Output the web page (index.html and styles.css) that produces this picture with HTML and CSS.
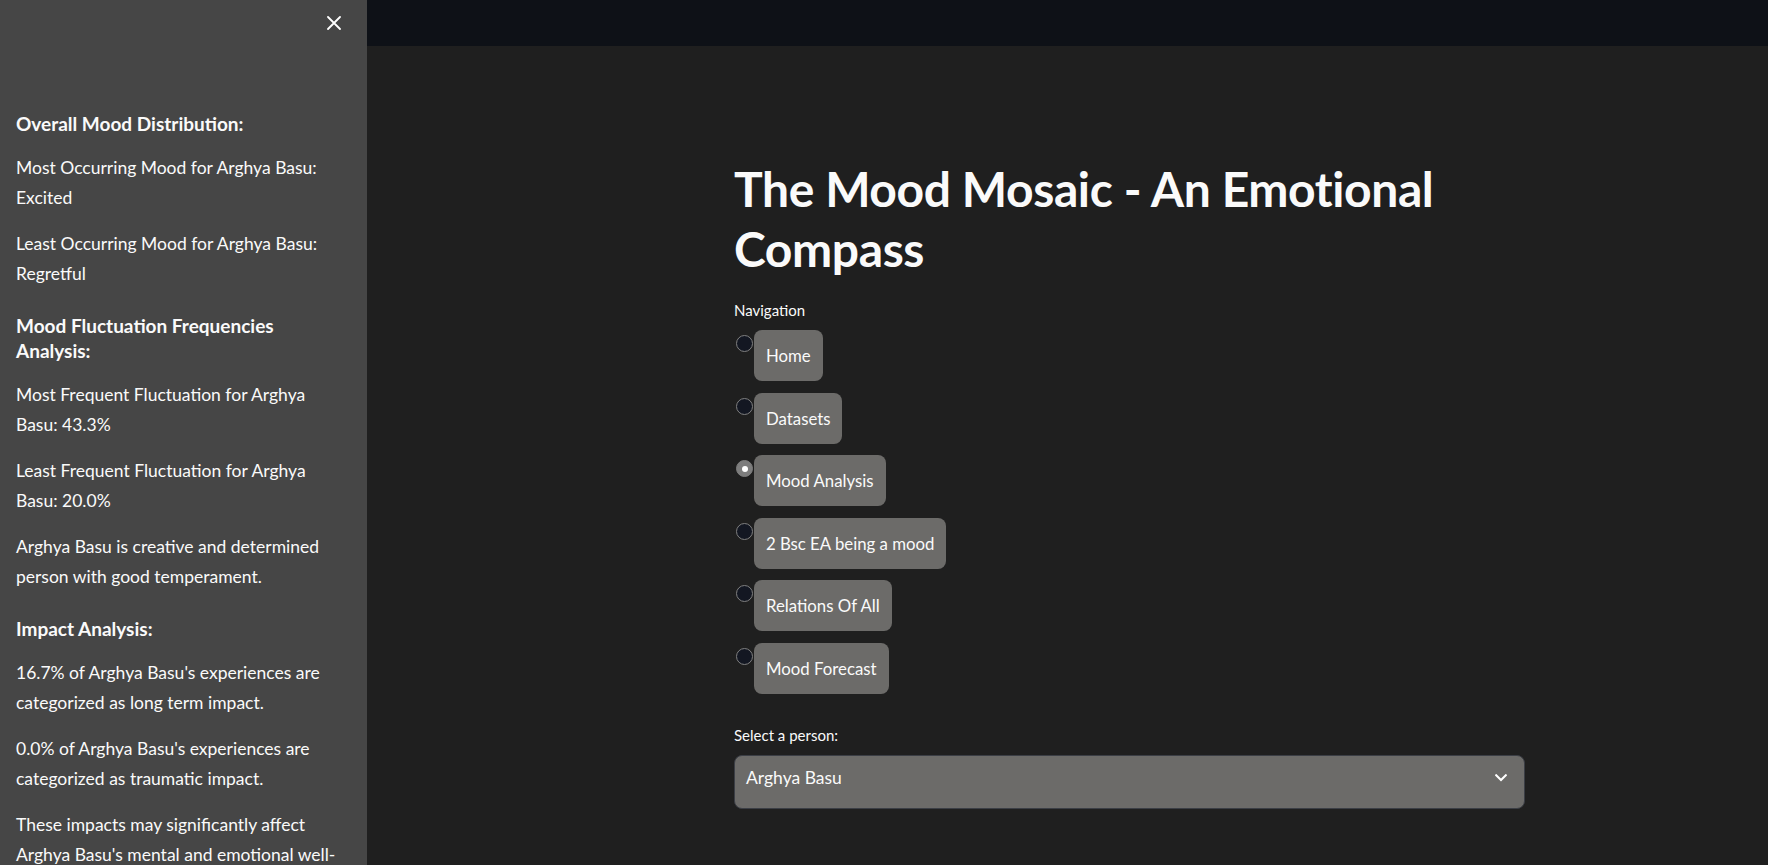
FILE: index.html
```html
<!DOCTYPE html>
<html lang="en">
<head>
<meta charset="utf-8">
<title>The Mood Mosaic - An Emotional Compass</title>
<link rel="stylesheet" href="styles.css">
</head>
<body>
<div class="app">
  <aside class="sidebar">
    <div class="sidebar-top">
      <button class="close-btn" aria-label="Close sidebar">
        <svg width="14" height="14" viewBox="0 0 14 14"><path d="M1 1 L13 13 M13 1 L1 13" stroke="#ffffff" stroke-width="1.8" stroke-linecap="round" fill="none"/></svg>
      </button>
    </div>
    <div class="sidebar-content">
      <h3 class="side-heading">Overall Mood Distribution:</h3>
      <p class="side-text">Most Occurring Mood for Arghya Basu:<br>Excited</p>
      <p class="side-text">Least Occurring Mood for Arghya Basu:<br>Regretful</p>
      <h3 class="side-heading">Mood Fluctuation Frequencies<br>Analysis:</h3>
      <p class="side-text">Most Frequent Fluctuation for Arghya<br>Basu: 43.3%</p>
      <p class="side-text">Least Frequent Fluctuation for Arghya<br>Basu: 20.0%</p>
      <p class="side-text">Arghya Basu is creative and determined<br>person with good temperament.</p>
      <h3 class="side-heading">Impact Analysis:</h3>
      <p class="side-text">16.7% of Arghya Basu's experiences are<br>categorized as long term impact.</p>
      <p class="side-text">0.0% of Arghya Basu's experiences are<br>categorized as traumatic impact.</p>
      <p class="side-text">These impacts may significantly affect<br>Arghya Basu's mental and emotional well-<br>being.</p>
    </div>
  </aside>
  <main class="main">
    <header class="topbar"></header>
    <section class="content">
      <div class="block">
        <h1 class="title">The Mood Mosaic - An Emotional Compass</h1>
        <div class="field-label nav-label">Navigation</div>
        <div class="radio-group">
          <label class="radio-item"><span class="radio-dot"></span><span class="radio-pill">Home</span></label>
          <label class="radio-item"><span class="radio-dot"></span><span class="radio-pill">Datasets</span></label>
          <label class="radio-item"><span class="radio-dot checked"></span><span class="radio-pill">Mood Analysis</span></label>
          <label class="radio-item"><span class="radio-dot"></span><span class="radio-pill">2 Bsc EA being a mood</span></label>
          <label class="radio-item"><span class="radio-dot"></span><span class="radio-pill">Relations Of All</span></label>
          <label class="radio-item"><span class="radio-dot"></span><span class="radio-pill">Mood Forecast</span></label>
        </div>
        <div class="field-label select-label">Select a person:</div>
        <div class="select-box">
          <span class="select-value">Arghya Basu</span>
          <svg class="chevron" width="12" height="8" viewBox="0 0 12 8"><path d="M1.2 1.2 L6 6 L10.8 1.2" stroke="#ffffff" stroke-width="2" fill="none" stroke-linecap="square"/></svg>
        </div>
      </div>
    </section>
  </main>
</div>
</body>
</html>
```
FILE: styles.css
```css
* { box-sizing: border-box; }

html, body {
  margin: 0;
  padding: 0;
  height: 100%;
  overflow: hidden;
}

body {
  font-family: Lato, "Open Sans", "Liberation Sans", sans-serif;
  color: #fafafa;
  background: #1f1f1f;
}

.app {
  display: flex;
  height: 865px;
}

/* ---------- Sidebar ---------- */
.sidebar {
  width: 367px;
  flex: 0 0 367px;
  background: #464646;
  display: flex;
  flex-direction: column;
  overflow: hidden;
}

.sidebar-top {
  height: 46px;
  flex-shrink: 0;
  display: flex;
  justify-content: flex-end;
  align-items: center;
  padding-right: 26px;
}

.close-btn {
  background: none;
  border: 0;
  padding: 0;
  width: 14px;
  height: 14px;
  display: flex;
  cursor: pointer;
}

.sidebar-content {
  flex-shrink: 0;
  padding: 65px 6px 0 16px;
  display: flex;
  flex-direction: column;
  gap: 16px;
}

.side-heading {
  margin: 0 0 1px;
  font-size: 19px;
  font-weight: 700;
  line-height: 25px;
  padding-top: 8px;
}

.side-heading:first-child {
  padding-top: 0;
}

.side-text {
  margin: 0;
  font-size: 17.5px;
  line-height: 30px;
  white-space: nowrap;
}

/* ---------- Main ---------- */
.main {
  flex: 1;
  display: flex;
  flex-direction: column;
  background: #1f1f1f;
}

.topbar {
  height: 46px;
  flex-shrink: 0;
  background: #0e1117;
}

.content {
  padding: 113px 0 0 367px;
}

.block {
  width: 791px;
  display: flex;
  flex-direction: column;
}

.title {
  margin: 0;
  font-size: 48px;
  font-weight: 700;
  line-height: 60px;
  letter-spacing: -0.4px;
}

.field-label {
  font-size: 15px;
  line-height: 24px;
}

.nav-label {
  margin-top: 19px;
}

.radio-group {
  margin-top: 8px;
  display: flex;
  flex-direction: column;
  gap: 11.6px;
}

.radio-item {
  display: flex;
  align-items: flex-start;
  cursor: pointer;
}

.radio-dot {
  width: 17px;
  height: 17px;
  margin: 5px 1px 0 2px;
  border-radius: 50%;
  background: #131722;
  border: 1px solid #808080;
  display: flex;
  align-items: center;
  justify-content: center;
  flex: 0 0 auto;
}

.radio-dot.checked {
  background: #7d7d7d;
  border-color: #7d7d7d;
}

.radio-dot.checked::after {
  content: "";
  width: 6px;
  height: 6px;
  border-radius: 50%;
  background: #ffffff;
}

.radio-pill {
  height: 51px;
  display: flex;
  align-items: center;
  padding: 0 12px;
  background: #6c6b69;
  border-radius: 8px;
  font-size: 16.8px;
}

.select-label {
  margin-top: 29px;
}

.select-box {
  margin-top: 8px;
  height: 54px;
  background: #6c6b69;
  border: 1px solid #3b3e45;
  border-radius: 8px;
  display: flex;
  align-items: flex-start;
  justify-content: space-between;
  padding: 8px 17px 0 11px;
}

.select-value {
  font-size: 17.5px;
  line-height: 28px;
}

.chevron {
  margin-top: 10px;
}
```
